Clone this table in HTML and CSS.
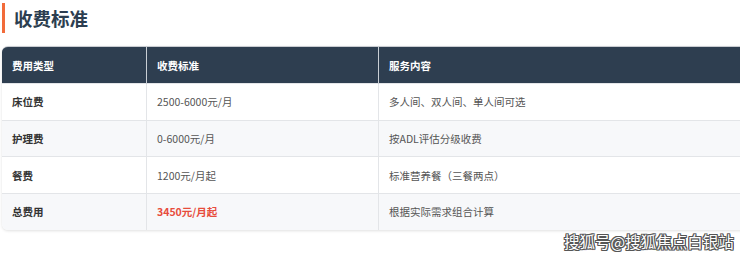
FILE: index.html
```html
<!DOCTYPE html>
<html lang="zh-CN">
<head>
<meta charset="utf-8">
<link rel="stylesheet" href="styles.css">
</head>
<body>
<div class="page">
  <h2 class="title">收费标准</h2>
  <div class="table-wrap">
    <table class="fee">
      <thead>
        <tr><th class="c1">费用类型</th><th class="c2">收费标准</th><th class="c3">服务内容</th></tr>
      </thead>
      <tbody>
        <tr><td class="name">床位费</td><td>2500-6000元/月</td><td>多人间、双人间、单人间可选</td></tr>
        <tr><td class="name">护理费</td><td>0-6000元/月</td><td>按ADL评估分级收费</td></tr>
        <tr><td class="name">餐费</td><td>1200元/月起</td><td>标准营养餐（三餐两点）</td></tr>
        <tr><td class="name">总费用</td><td class="total">3450元/月起</td><td>根据实际需求组合计算</td></tr>
      </tbody>
    </table>
  </div>
  <div class="watermark">搜狐号@搜狐焦点白银站</div>
</div>
</body>
</html>
```
FILE: styles.css
```css
html, body {
  margin: 0;
  padding: 0;
  background: #ffffff;
  overflow: hidden;
}
body {
  font-family: "Noto Sans CJK SC", "Noto Sans", sans-serif;
  width: 740px;
  height: 257px;
}
.page {
  position: relative;
  width: 740px;
  height: 257px;
  padding: 3px 0 0 2px;
  box-sizing: border-box;
  overflow: hidden;
}
.title {
  margin: 0;
  height: 30px;
  line-height: 30px;
  border-left: 3px solid #f26b3a;
  padding-left: 9px;
  font-size: 18.5px;
  font-weight: 700;
  color: #2c3e50;
}
.table-wrap {
  margin-top: 13px;
  width: 790px;
  border-radius: 6px;
  overflow: hidden;
  box-shadow: 0 1px 3px rgba(0, 0, 0, 0.12);
  border-top: 1px solid #c9ccd1;
}
.fee {
  width: 100%;
  border-collapse: collapse;
  font-size: 10.5px;
}
.fee th, .fee td {
  text-align: left;
  padding: 0 11px 0 10px;
  border-right: 1px solid #e3e5e8;
}
.fee th {
  background: #2e3e50;
  color: #ffffff;
  font-weight: 700;
  height: 36px;
  border-right-color: #c9ced4;
}
.fee td {
  height: 35.7px;
  color: #555;
  border-top: 1px solid #e3e5e8;
}
.fee tbody tr:nth-child(even) td {
  background: #f7f8fa;
}
.c1 { width: 123px; }
.c2 { width: 210px; }
.fee td.name {
  color: #333;
  font-weight: 700;
}
.fee td.total {
  color: #e74c3c;
  font-weight: 700;
}
.watermark {
  position: absolute;
  left: 564px;
  top: 230px;
  font-size: 15.5px;
  line-height: 22px;
  white-space: nowrap;
  color: #ffffff;
  text-shadow: 1px 0 0 #555, -1px 0 0 #555, 0 1px 0 #555, 0 -1px 0 #555,
               1px 1px 0 #555, -1px -1px 0 #555, 1px -1px 0 #555, -1px 1px 0 #555;
}
```
